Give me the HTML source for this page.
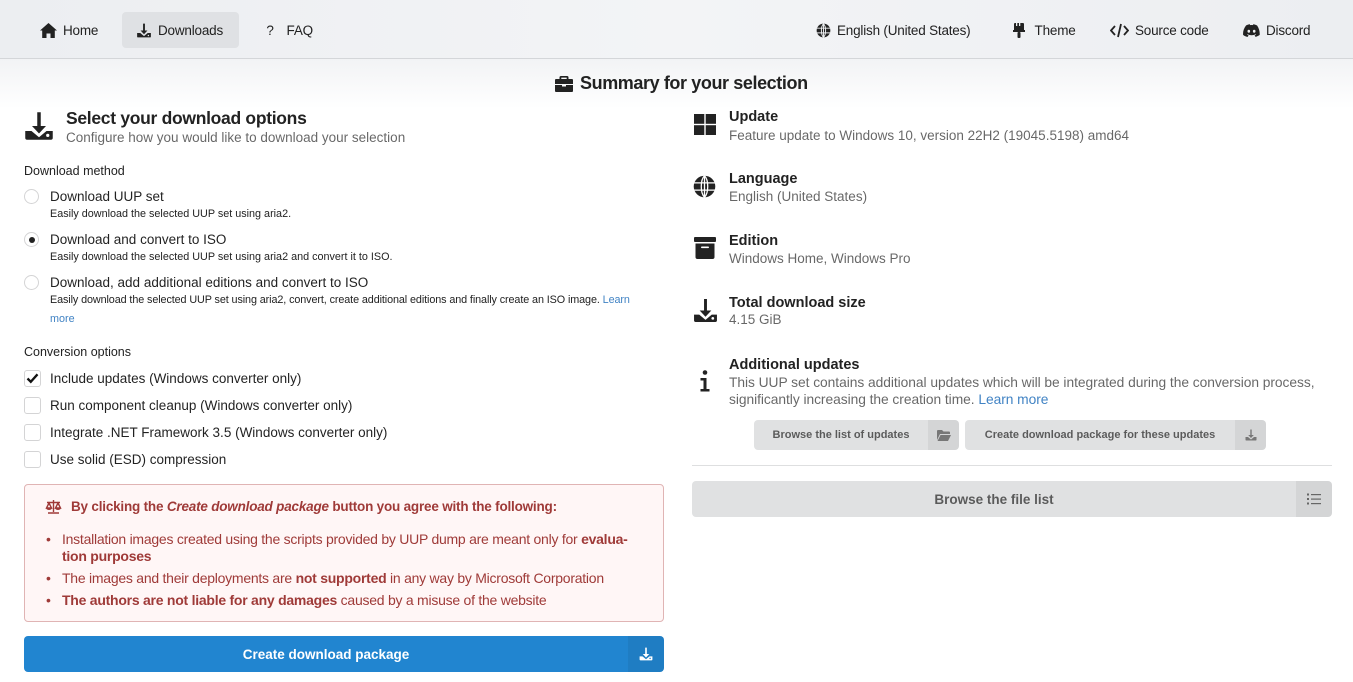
<!DOCTYPE html>
<html><head><meta charset="utf-8"><style>
*{box-sizing:border-box;margin:0;padding:0}
body{width:1353px;height:682px;overflow:hidden;font-family:"Liberation Sans",sans-serif;color:rgba(0,0,0,.87);background:#fff;position:relative;font-size:13px}
.hdr{position:absolute;left:0;top:0;width:1353px;height:59px;background:linear-gradient(90deg,#eceef1,#f3f4f6 50%,#eceef1);border-bottom:1px solid #d4d6d9}
.fade{position:absolute;left:0;top:59px;width:1353px;height:50px;background:linear-gradient(#f2f3f5,#fff)}
.ab{position:absolute;white-space:nowrap}
.nav{position:absolute;top:12px;height:36px;display:flex;align-items:center;font-size:13.5px;letter-spacing:-0.2px;color:#222;gap:6px;white-space:nowrap}
svg{display:block}
.gray{color:rgba(0,0,0,.6)}
.radio{position:absolute;width:15px;height:15px;border:1px solid #d4d4d5;border-radius:50%;background:#fff}
.cb{position:absolute;width:17px;height:17px;border:1px solid #d4d4d5;border-radius:3px;background:#fff}
.lbl{position:absolute;font-size:13.5px;white-space:nowrap}
.sub{position:absolute;font-size:10.8px;white-space:nowrap;color:#222}
.btn{position:absolute;background:#e0e1e2;border-radius:4px;color:rgba(0,0,0,.6);font-weight:bold;font-size:11px;display:flex;align-items:center;overflow:hidden}
.btn .ic{height:100%;display:flex;align-items:center;justify-content:center;background:rgba(0,0,0,.05)}
.bl{position:relative;padding-left:16px}
.bl:before{content:"•";position:absolute;left:0;top:0}
</style></head><body>
<div class="hdr"></div>
<div class="fade"></div>
<div class="nav" style="left:40px"><svg width="17" height="15" viewBox="0 0 17 15"><path d="M8.5 0L0 7.5h2.2V15h4.3v-4.5h4V15h4.3V7.5H17z" fill="#222"/></svg>Home</div>
<div class="nav" style="left:122px;width:117px;background:#dfe1e4;border-radius:4px;padding-left:14px"><svg width="16" height="15" viewBox="0 0 24 24"><path d="M10.5 1h3v11h4l-5.5 6-5.5-6h4z M1 16h5l6 5 6-5h5v6a1 1 0 0 1-1 1H2a1 1 0 0 1-1-1z" fill="#222"/><circle cx="19" cy="20" r="1.2" fill="#dfe1e4"/></svg>Downloads</div>
<div class="nav" style="left:263px"><span style="width:14px;text-align:center">?</span>&nbsp;FAQ</div>
<div class="nav" style="left:816px"><svg width="15" height="15" viewBox="0 0 16 16"><circle cx="8" cy="8" r="7.3" fill="#222"/><path d="M0.7 5.5h14.6M0.7 10.5h14.6M8 0.7v14.6M8 0.7c-3 3-3 11.6 0 14.6M8 0.7c3 3 3 11.6 0 14.6" stroke="#eef0f2" stroke-width="1" fill="none"/></svg>English (United States)</div>
<div class="nav" style="left:1013px"><svg width="12" height="15" viewBox="0 0 12 15"><rect x="1" y="0" width="10" height="8" rx="1" fill="#222"/><rect x="3" y="0" width="1.3" height="3" fill="#eef0f2"/><rect x="6" y="0" width="1.3" height="3" fill="#eef0f2"/><rect x="0" y="7" width="12" height="2" fill="#222"/><rect x="4.5" y="9" width="3" height="6" rx="1" fill="#222"/></svg>&nbsp;Theme</div>
<div class="nav" style="left:1110px"><svg width="19" height="15" viewBox="0 0 19 15"><path d="M5 3L1 7.5 5 12M14 3l4 4.5L14 12M11 1L8 14" stroke="#222" stroke-width="1.8" fill="none"/></svg>Source code</div>
<div class="nav" style="left:1243px"><svg width="17" height="13" viewBox="0 0 17 13"><path d="M3 1.5C5 .6 6.5.3 6.8.3l.3.8c1-.2 2-.2 2.9 0l.3-.8c.3 0 1.8.3 3.8 1.2 2 3 2.8 6 2.6 9.4-1.5 1.1-3 1.7-4.2 2l-.9-1.5c.6-.2 1.1-.5 1.6-.8l-.4-.3c-2.7 1.300-5.7 1.300-8.4 0l-.4.3c.5.3 1 .6 1.6.8l-.9 1.5C2.7 12.6 1.3 12 .1 10.9-.2 7.6.8 4.5 3 1.5z" fill="#222"/><ellipse cx="5.8" cy="7.3" rx="1.3" ry="1.5" fill="#eef0f2"/><ellipse cx="11.2" cy="7.3" rx="1.3" ry="1.5" fill="#eef0f2"/></svg>Discord</div>

<div class="ab" style="left:555px;top:73px;font-size:18px;font-weight:bold;display:flex;align-items:center;gap:7px;color:#222"><svg width="18" height="16" viewBox="0 0 18 16"><path d="M6 0h6a1.5 1.5 0 0 1 1.5 1.5V3H17a1 1 0 0 1 1 1v4H0V4a1 1 0 0 1 1-1h3.5V1.5A1.5 1.5 0 0 1 6 0zm.3 1.6V3h5.4V1.6z M0 9h7v1.5h4V9h7v6a1 1 0 0 1-1 1H1a1 1 0 0 1-1-1z" fill="#222"/></svg><span style="letter-spacing:-0.4px">Summary for your selection</span></div>

<!-- left -->
<svg class="ab" style="left:24px;top:111px" width="30" height="30" viewBox="0 0 24 24"><path d="M10.6 1h2.8v11h4.2l-5.6 6-5.6-6h4.2z M1 16h5l6 5 6-5h5v5.5a1.5 1.5 0 0 1-1.5 1.5H2.5A1.5 1.5 0 0 1 1 21.5z" fill="#222"/><circle cx="19" cy="19.5" r="1.3" fill="#fff"/></svg>
<div class="ab" style="left:66px;top:108px;font-size:17.5px;font-weight:bold;color:#222;letter-spacing:-0.3px">Select your download options</div>
<div class="ab gray" style="left:66px;top:130px;font-size:13.5px">Configure how you would like to download your selection</div>
<div class="ab" style="left:24px;top:164px;font-size:12.5px;color:#222">Download method</div>

<div class="radio" style="left:24px;top:189px"></div>
<div class="lbl" style="left:50px;top:189px">Download UUP set</div>
<div class="sub" style="left:50px;top:208px">Easily download the selected UUP set using aria2.</div>
<div class="radio" style="left:24px;top:232px"><div style="position:absolute;left:3.5px;top:3.5px;width:6px;height:6px;border-radius:50%;background:#222"></div></div>
<div class="lbl" style="left:50px;top:232px">Download and convert to ISO</div>
<div class="sub" style="left:50px;top:251px">Easily download the selected UUP set using aria2 and convert it to ISO.</div>
<div class="radio" style="left:24px;top:275px"></div>
<div class="lbl" style="left:50px;top:275px">Download, add additional editions and convert to ISO</div>
<div class="sub" style="left:50px;top:294px;letter-spacing:-0.1px">Easily download the selected UUP set using aria2, convert, create additional editions and finally create an ISO image. <span style="color:#4183c4">Learn</span></div>
<div class="sub" style="left:50px;top:313px;color:#4183c4">more</div>

<div class="ab" style="left:24px;top:345px;font-size:12.5px;color:#222">Conversion options</div>
<div class="cb" style="left:24px;top:370px"><svg width="15" height="15" viewBox="0 0 15 15"><path d="M2.5 7.5l3.3 3.3 6.7-7.5" stroke="#111" stroke-width="2.3" fill="none"/></svg></div>
<div class="lbl" style="left:50px;top:371px">Include updates (Windows converter only)</div>
<div class="cb" style="left:24px;top:397px"></div>
<div class="lbl" style="left:50px;top:398px">Run component cleanup (Windows converter only)</div>
<div class="cb" style="left:24px;top:424px"></div>
<div class="lbl" style="left:50px;top:425px">Integrate .NET Framework 3.5 (Windows converter only)</div>
<div class="cb" style="left:24px;top:451px"></div>
<div class="lbl" style="left:50px;top:452px">Use solid (ESD) compression</div>

<div class="ab" style="left:24px;top:484px;width:640px;height:138px;background:#fff6f6;border:1px solid #e0b4b4;border-radius:4px"></div>
<div class="ab" style="left:45px;top:499px;font-size:13.5px;font-weight:bold;color:#9f3a38;display:flex;align-items:center;gap:9px;letter-spacing:-0.2px"><svg width="17" height="14" viewBox="0 0 17 14"><path d="M8.5 0v12M3 13h11M2 2.5h13M4 3L1.5 8h5zM13 3l-2.5 5h5z" stroke="#9f3a38" stroke-width="1.4" fill="none"/><path d="M1 8h6a3 2 0 0 1-6 0zM10 8h6a3 2 0 0 1-6 0z" fill="#9f3a38"/></svg><span>By clicking the <i>Create download package</i> button you agree with the following:</span></div>
<div class="ab" style="left:46px;top:531px;width:600px;white-space:normal;font-size:14px;color:#9f3a38;line-height:17px;letter-spacing:-0.25px">
<div class="bl">Installation images created using the scripts provided by UUP dump are meant only for <b>evalua-<br>tion purposes</b></div>
<div class="bl" style="margin-top:5px">The images and their deployments are <b>not supported</b> in any way by Microsoft Corporation</div>
<div class="bl" style="margin-top:5px"><b>The authors are not liable for any damages</b> caused by a misuse of the website</div>
</div>

<div class="ab" style="left:24px;top:636px;width:640px;height:36px;background:#2185d0;border-radius:4px;color:#fff;font-weight:bold;font-size:13.5px;display:flex;align-items:center;overflow:hidden">
<div style="flex:1;text-align:center">Create download package</div>
<div style="width:36px;height:100%;background:rgba(0,0,0,.06);display:flex;align-items:center;justify-content:center"><svg width="14" height="14" viewBox="0 0 24 24"><path d="M10.6 1h2.8v11h4.2l-5.6 6-5.6-6h4.2z M1 16h5l6 5 6-5h5v5.5a1.5 1.5 0 0 1-1.5 1.5H2.5A1.5 1.5 0 0 1 1 21.5z" fill="#fff"/><circle cx="19" cy="19.5" r="1.3" fill="#2185d0"/></svg></div></div>

<!-- right -->
<svg class="ab" style="left:694px;top:114px" width="22" height="21" viewBox="0 0 22 21"><rect x="0" y="0" width="10.3" height="9.8" fill="#222"/><rect x="11.7" y="0" width="10.3" height="9.8" fill="#222"/><rect x="0" y="11.2" width="10.3" height="9.8" fill="#222"/><rect x="11.7" y="11.2" width="10.3" height="9.8" fill="#222"/></svg>
<div class="ab" style="left:729px;top:109px;font-size:14.5px;font-weight:bold;color:#222">Update</div>
<div class="ab gray" style="left:729px;top:128px;font-size:13.5px">Feature update to Windows 10, version 22H2 (19045.5198) amd64</div>

<svg class="ab" style="left:693px;top:175px" width="23" height="23" viewBox="0 0 16 16"><circle cx="8" cy="8" r="7.5" fill="#222"/><path d="M0.5 5.5h15M0.5 10.5h15M8 0.5v15M8 0.5c-3 3-3 12 0 15M8 0.5c3 3 3 12 0 15" stroke="#fff" stroke-width="0.9" fill="none"/></svg>
<div class="ab" style="left:729px;top:171px;font-size:14.5px;font-weight:bold;color:#222">Language</div>
<div class="ab gray" style="left:729px;top:189px;font-size:13.5px">English (United States)</div>

<svg class="ab" style="left:694px;top:237px" width="22" height="22" viewBox="0 0 22 22"><rect x="0" y="0" width="22" height="5" rx="1" fill="#222"/><path d="M1.5 6.5h19v13.5a2 2 0 0 1-2 2h-15a2 2 0 0 1-2-2z" fill="#222"/><rect x="7" y="9.5" width="8" height="1.6" rx=".8" fill="#fff"/></svg>
<div class="ab" style="left:729px;top:233px;font-size:14.5px;font-weight:bold;color:#222">Edition</div>
<div class="ab gray" style="left:729px;top:251px;font-size:13.5px">Windows Home, Windows Pro</div>

<svg class="ab" style="left:693px;top:298px" width="25" height="25" viewBox="0 0 24 24"><path d="M10.6 1h2.8v11h4.2l-5.6 6-5.6-6h4.2z M1 16h5l6 5 6-5h5v5.5a1.5 1.5 0 0 1-1.5 1.5H2.5A1.5 1.5 0 0 1 1 21.5z" fill="#222"/><circle cx="19" cy="19.5" r="1.3" fill="#fff"/></svg>
<div class="ab" style="left:729px;top:295px;font-size:14.5px;font-weight:bold;color:#222">Total download size</div>
<div class="ab gray" style="left:729px;top:312px;font-size:13.5px">4.15 GiB</div>

<svg class="ab" style="left:699px;top:370px" width="12" height="22" viewBox="0 0 12 22"><circle cx="6" cy="2.5" r="2.3" fill="#222"/><path d="M1.5 8h6v11h3v2.5h-9V19h3v-8.5h-3z" fill="#222"/></svg>
<div class="ab" style="left:729px;top:357px;font-size:14.5px;font-weight:bold;color:#222">Additional updates</div>
<div class="ab gray" style="left:729px;top:374px;font-size:13.8px;line-height:17px;width:603px;white-space:normal;letter-spacing:-0.05px">This UUP set contains additional updates which will be integrated during the conversion process, significantly increasing the creation time. <span style="color:#4183c4">Learn more</span></div>

<div class="btn" style="left:754px;top:420px;width:205px;height:30px"><div style="flex:1;text-align:center">Browse the list of updates</div><div class="ic" style="width:31px"><svg width="14" height="11" viewBox="0 0 14 11"><path d="M0 1a1 1 0 0 1 1-1h4l1.5 1.5H12a1 1 0 0 1 1 1V4H3L0 10z M3.5 5H14l-3 6H0.5z" fill="#777"/></svg></div></div>
<div class="btn" style="left:965px;top:420px;width:301px;height:30px"><div style="flex:1;text-align:center">Create download package for these updates</div><div class="ic" style="width:31px"><svg width="12" height="12" viewBox="0 0 24 24"><path d="M10.6 1h2.8v11h4.2l-5.6 6-5.6-6h4.2z M1 16h5l6 5 6-5h5v5.5a1.5 1.5 0 0 1-1.5 1.5H2.5A1.5 1.5 0 0 1 1 21.5z" fill="#777"/></svg></div></div>

<div class="ab" style="left:692px;top:465px;width:640px;height:1px;background:#dedfe0"></div>
<div class="btn" style="left:692px;top:481px;width:640px;height:36px;font-size:13.5px"><div style="flex:1;text-align:center">Browse the file list</div><div class="ic" style="width:36px"><svg width="14" height="12" viewBox="0 0 14 12"><g fill="#666"><rect x="0" y="0.5" width="2" height="2"/><rect x="0" y="5" width="2" height="2"/><rect x="0" y="9.5" width="2" height="2"/><rect x="4" y="1" width="10" height="1.2"/><rect x="4" y="5.5" width="10" height="1.2"/><rect x="4" y="10" width="10" height="1.2"/></g></svg></div></div>
</body></html>
